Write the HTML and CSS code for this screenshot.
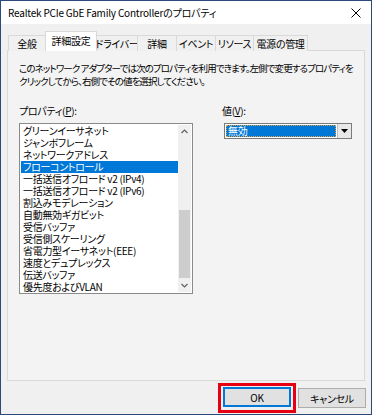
FILE: index.html
```html
<!DOCTYPE html>
<html lang="ja">
  <head>
    <meta charset="UTF-8" />
    <meta name="viewport" content="width=device-width, initial-scale=1.0" />
    <title>プロパティ</title>
    <link rel="stylesheet" href="styles.css">
  </head>
  <body>
    <div class="window">
      <div class="titlebar">
        <span class="title">Realtek PCIe GbE Family Controllerのプロパティ</span>
        <svg class="close" width="10" height="10" viewBox="0 0 10 10">
          <path d="M0.5 0.5 L9.5 9.5 M9.5 0.5 L0.5 9.5" stroke="#000" stroke-width="1" fill="none" />
        </svg>
      </div>
      <div class="client">
        <div class="tabs">
          <div class="tab tab-general">全般</div>
          <div class="tab active">詳細設定</div>
          <div class="tab tab-driver">ドライバー</div>
          <div class="tab tab-detail">詳細</div>
          <div class="tab tab-event">イベント</div>
          <div class="tab tab-resource">リソース</div>
          <div class="tab tab-power">電源の管理</div>
        </div>
        <div class="panel">
          <p class="desc">このネットワーク アダプターでは次のプロパティを利用できます。左側で変更するプロパティを<br>クリックしてから、右側でその値を選択してください。</p>
          <div class="columns">
            <div class="prop-col">
              <div class="label">プロパティ(<u>P</u>):</div>
              <div class="listbox">
                <ul class="items">
                  <li>グリーンイーサネット</li>
                  <li>ジャンボフレーム</li>
                  <li>ネットワークアドレス</li>
                  <li class="selected">フローコントロール</li>
                  <li>一括送信オフロード v2 (IPv4)</li>
                  <li>一括送信オフロード v2 (IPv6)</li>
                  <li>割込みモデレーション</li>
                  <li>自動無効ギガビット</li>
                  <li>受信バッファ</li>
                  <li>受信側スケーリング</li>
                  <li>省電力型イーサネット(EEE)</li>
                  <li>速度とデュプレックス</li>
                  <li>伝送バッファ</li>
                  <li>優先度およびVLAN</li>
                </ul>
                <div class="scrollbar">
                  <svg class="arrow" width="13" height="13" viewBox="0 0 13 13">
                    <path d="M3.5 8 L6.5 5 L9.5 8" stroke="#606060" stroke-width="1.2" fill="none" />
                  </svg>
                  <div class="track">
                    <div class="thumb"></div>
                  </div>
                  <svg class="arrow" width="13" height="13" viewBox="0 0 13 13">
                    <path d="M3.5 5 L6.5 8 L9.5 5" stroke="#606060" stroke-width="1.2" fill="none" />
                  </svg>
                </div>
              </div>
            </div>
            <div class="value-col">
              <div class="label">値(<u>V</u>):</div>
              <div class="combo">
                <div class="combo-field"><span class="combo-text">無効</span></div>
                <div class="combo-button">
                  <svg width="7" height="4" viewBox="0 0 7 4">
                    <path d="M0 0 L7 0 L3.5 4 Z" fill="#000" />
                  </svg>
                </div>
              </div>
            </div>
          </div>
        </div>
        <div class="buttons">
          <div class="highlight">
            <button class="btn default">OK</button>
          </div>
          <button class="btn">キャンセル</button>
        </div>
      </div>
    </div>
  </body>
</html>
```

FILE: styles.css
```css
body {
  margin: 0;
  font-family: "Noto Sans CJK JP", "Noto Sans", sans-serif;
  font-size: 10px;
  font-feature-settings: "palt";
  letter-spacing: -0.3px;
  color: #000;
  background: #fff;
}
.window {
  width: 372px;
  height: 415px;
  box-sizing: border-box;
  border: 1px solid #2b4a78;
  display: flex;
  flex-direction: column;
  background: #f0f0f0;
}
.titlebar {
  height: 23px;
  background: #fff;
  display: flex;
  align-items: center;
  justify-content: space-between;
  padding: 0 7px 0 7px;
}
.title {
  font-size: 10px;
  letter-spacing: -0.2px;
  white-space: nowrap;
}
.close {
  margin-right: 3px;
}
.client {
  flex: 1;
  padding: 7px 6px 0 6px;
  display: flex;
  flex-direction: column;
}
.tabs {
  display: flex;
  align-items: flex-end;
  height: 20px;
  margin-bottom: -1px;
  padding-left: 1px;
  position: relative;
  z-index: 1;
}
.tab {
  height: 16px;
  box-sizing: border-box;
  border: 1px solid #d9d9d9;
  border-bottom: none;
  margin-right: -1px;
  display: flex;
  align-items: center;
  justify-content: center;
  line-height: 1;
  white-space: nowrap;
  background: #f0f0f0;
}
.tab-general { width: 38px; }
.tab-driver { width: 42px; }
.tab-detail { width: 40px; }
.tab-event { width: 40px; }
.tab-resource { width: 39px; }
.tab-power { width: 55px; }
.tab.active {
  width: 52px;
  height: 20px;
  background: #fff;
  padding-bottom: 2px;
}
.panel {
  height: 331px;
  box-sizing: border-box;
  border: 1px solid #d9d9d9;
  background: #f3f3f3;
  padding: 11px 11px 0 11px;
}
.desc {
  margin: 0;
  font-size: 9.5px;
  line-height: 13px;
  white-space: nowrap;
  letter-spacing: -0.9px;
}
.columns {
  display: flex;
  margin-top: 16px;
}
.label {
  line-height: 13px;
  margin-bottom: 6px;
  white-space: nowrap;
}
.prop-col {
  width: 174px;
}
.listbox {
  height: 171px;
  box-sizing: border-box;
  border: 1px solid #8a8a8a;
  background: #fff;
  display: flex;
  padding: 1px;
}
.items {
  list-style: none;
  margin: 0;
  padding: 0;
  flex: 1;
}
.items li {
  height: 12px;
  line-height: 12px;
  padding-left: 2px;
  white-space: nowrap;
}
.items li.selected {
  background: #0078d7;
  color: #fff;
}
.scrollbar {
  width: 13px;
  background: #f0f0f0;
  display: flex;
  flex-direction: column;
}
.arrow {
  display: block;
}
.track {
  flex: 1;
  display: flex;
  flex-direction: column;
  justify-content: flex-end;
}
.thumb {
  height: 68px;
  margin: 0 1px 1px 1px;
  background: #cdcdcd;
}
.value-col {
  margin-left: 31px;
}
.value-col .label {
  margin-left: -2px;
}
.combo {
  width: 128px;
  height: 16px;
  box-sizing: border-box;
  border: 1px solid #7a7a7a;
  background: #fff;
  display: flex;
}
.combo-field {
  flex: 1;
  padding: 1px;
  display: flex;
}
.combo-text {
  flex: 1;
  background: #0078d7;
  color: #fff;
  outline: 1px dotted #e0a040;
  outline-offset: -1px;
  line-height: 12px;
  padding-left: 2px;
}
.combo-button {
  width: 13px;
  background: #e8e8e8;
  border-left: 1px solid #c0c0c0;
  display: flex;
  align-items: center;
  justify-content: center;
}
.buttons {
  display: flex;
  justify-content: flex-end;
  align-items: center;
  gap: 2px;
  margin-top: 2px;
  margin-right: -1px;
}
.highlight {
  border: 3px solid #e60012;
  padding: 1px 2px 3px 2px;
}
.btn {
  width: 68px;
  height: 20px;
  box-sizing: border-box;
  font-family: inherit;
  font-size: 10px;
  font-feature-settings: "palt";
  letter-spacing: -0.3px;
  background: #e1e1e1;
  border: 1px solid #adadad;
  padding: 0;
  margin: 0;
}
.btn.default {
  border: 1px solid #0078d7;
  box-shadow: inset 0 0 0 1px #0078d7;
}
```
